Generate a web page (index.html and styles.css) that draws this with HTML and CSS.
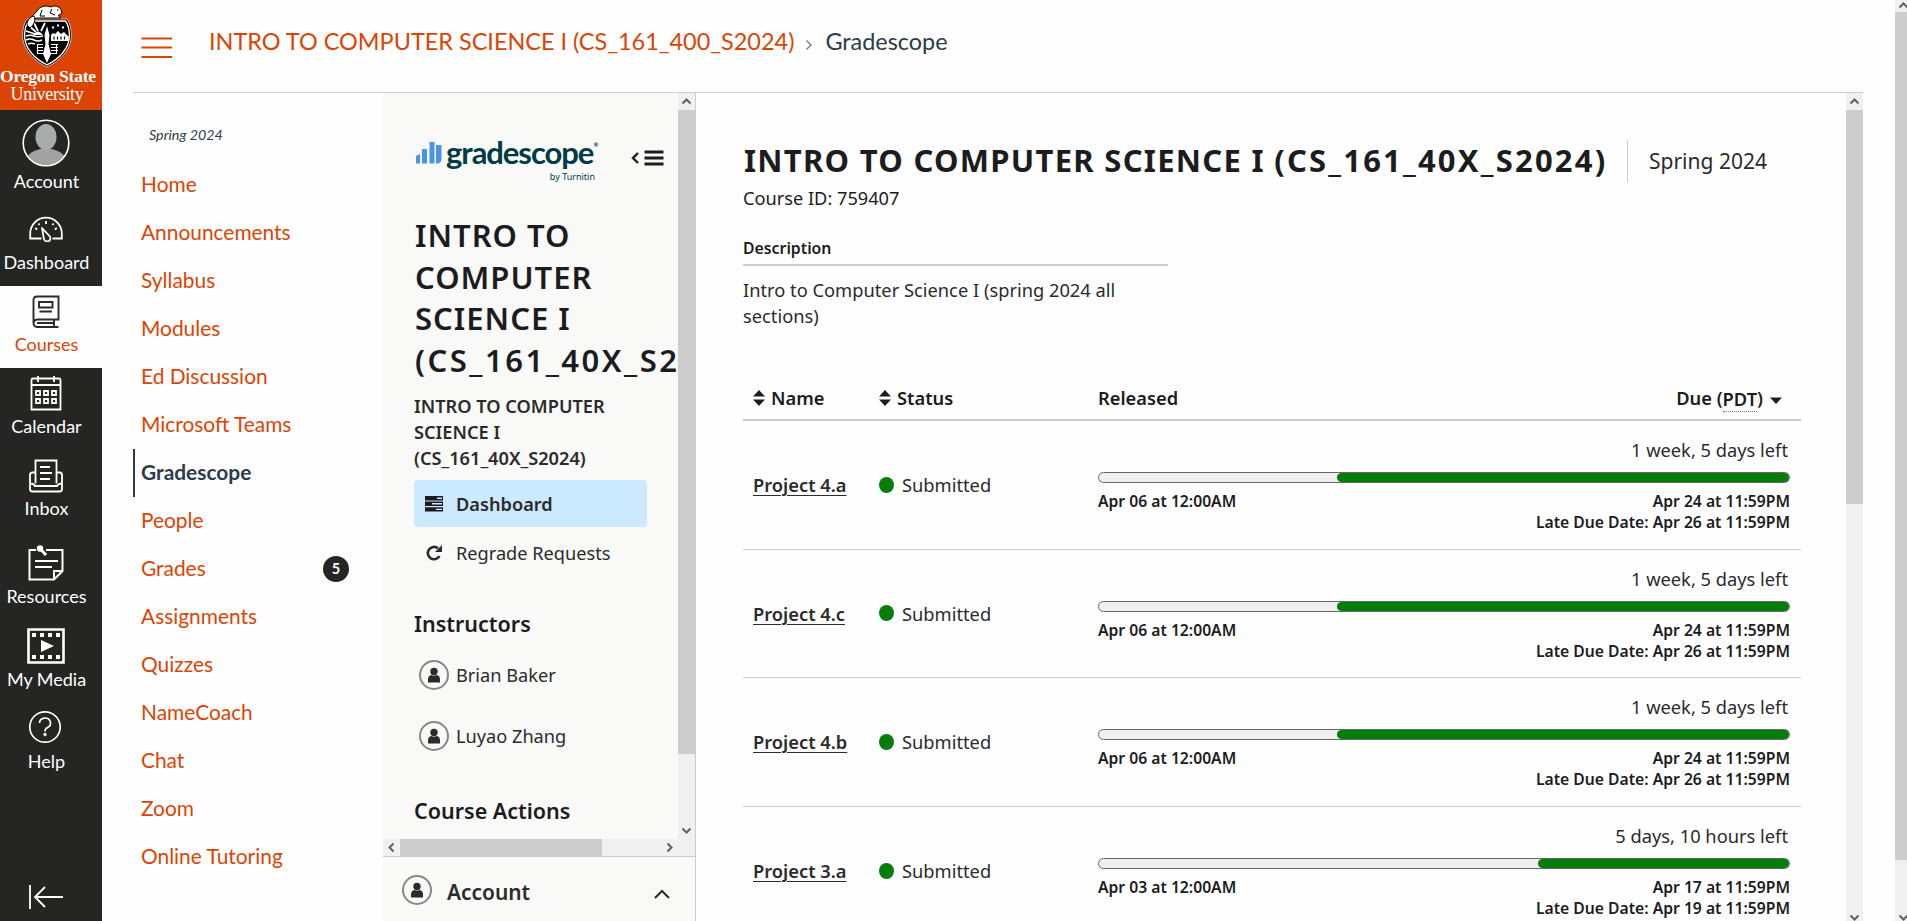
FILE: index.html
```html
<!DOCTYPE html>
<html lang="en">
<head>
<meta charset="utf-8">
<title>Gradescope</title>
<link rel="stylesheet" href="styles.css">
</head>
<body>
<div class="app">
  <nav class="global-nav">
    <div class="brand">
      <svg class="crest" width="50" height="63" viewBox="0 0 50 63">
        <path d="M5 14C1.500 19 .700 25 .700 31c0 13 11 25 24.300 31 13.300-6 24.300-18 24.300-31 0-6-.800-12-4.300-17z" fill="#000" stroke="#e9d9cf" stroke-width=".8"/>
        <path d="M6.500 16C3.500 20 2.600 25 2.600 31c0 12 10 23 22.400 28.800C37.400 54 47.400 43 47.400 31c0-6-.900-11-3.900-15z" fill="#000" stroke="#fff" stroke-width="1.300"/>
        <path d="M5 19l9 8M12 18l4 8M23 18l-4 8M4 26l9 3" stroke="#fff" stroke-width="1.800"/>
        <path d="M11 30q5-7 10 0z" fill="#fff"/>
        <path d="M4 31q4-1.500 8 0t9 0M4 35q4-2 8 0t8 0M6 39q3-1.500 7 0" stroke="#fff" stroke-width="1.700" fill="none"/>
        <path d="M25 21l-2.500 9 1 9-2.500 10 4 9 4-9-2.500-10 1-9z" fill="#fff"/>
        <path d="M29 36v-6l2-2 2 1 3-3 3 3 3-2 5 5-.5 4z" fill="#fff"/>
        <path d="M32 31.500v3M35.500 31.500v3M39 31.500v3M42.500 31.500v3" stroke="#000" stroke-width="1.200"/>
        <path d="M15 39.500h6M15 42.500h6M15 45.500h6M16 48.500h5M29 39.500h7M29 42.500h7M29 45.500h7M29 48.500h5M15.500 39v10M34.500 39v10" stroke="#fff" fill="none" stroke-width="1.200"/>
        <path d="M30 22.500h2M35 20.500h2M40 22.500h2" stroke="#fff" stroke-width="2"/>
        <path d="M10 14c0-4 3-5 5-8 3-5 9-6 14-4 3-2 8-1 10 2.500l1 4-4 2 3 2.500H15z" fill="#fff" stroke="#000" stroke-width="1"/>
        <path d="M5 20c0-5 3-8 7-9 2 4 0 9-4 12z" fill="#fff" stroke="#000" stroke-width="1"/>
        <path d="M20 5l-2 6h5M30 4l-2 4 5 2M35 5h1.500" stroke="#000" fill="none"/>
      </svg>
      <div class="brand-a">Oregon State</div>
      <div class="brand-b">University</div>
    </div>
    <a class="gn gn-account"><svg width="48" height="48" viewBox="0 0 48 48"><defs><clipPath id="av"><circle cx="24" cy="24" r="22"/></clipPath></defs><g clip-path="url(#av)"><ellipse cx="24" cy="42" rx="20" ry="12.500" fill="#a2a2a2"/><ellipse cx="24" cy="18" rx="10.500" ry="13" fill="#a9abaf"/></g><circle cx="24" cy="24" r="22.800" fill="none" stroke="#fff" stroke-width="1.600"/></svg><span>Account</span></a>
    <a class="gn"><svg width="36" height="26" viewBox="0 0 36 26" fill="none" stroke="#fff" stroke-width="1.800"><path d="M13.500 22.500H2.200V17.500a15.800 15.800 0 0 1 31.600 0v5H24.500"/><path d="M14 12l7 7.500a3.300 3.300 0 1 1-5.200 2.800z" stroke-linejoin="round"/><path d="M18 5v3M10.500 7.500l1 1.500M25.500 7.500l-1 1.500M7.200 12l2 1.500M28.800 12l-2 1.500"/></svg><span>Dashboard</span></a>
    <a class="gn gn-on"><svg width="28" height="34" viewBox="0 0 28 34" fill="none" stroke="#2b2b2b" stroke-width="1.900"><path d="M26.500 32H5C2.500 32 1.500 30 1.500 28V5c0-2.500 1.500-3.500 3.500-3.500h21.500v23H5.500c-2 0-3.500 1-3.500 3M5 28h17M22 25v6.500" /><path d="M7 7h13.500v5.500H7zM7.500 16.500H20"/></svg><span>Courses</span></a>
    <a class="gn"><svg width="32" height="36" viewBox="0 0 32 36" fill="none" stroke="#fff" stroke-width="1.800"><path d="M1.500 34.500V5q0-1.500 1.500-1.500h26q1.500 0 1.500 1.500v29.500zM1.500 10h29M8 1v6M24 1v6"/><path d="M6 16h4v4H6zM14 16h4v4h-4zM22 16h4v4h-4zM6 24h4v4H6zM14 24h4v4h-4zM22 24h4v4h-4z"/></svg><span>Calendar</span></a>
    <a class="gn"><svg width="36" height="34" viewBox="0 0 36 34" fill="none" stroke="#fff" stroke-width="1.800"><path d="M7.500 24.500V1.500h21v23M7.500 13.500H4.500q-2.500 0-2.500 2.500v14q0 2.500 2.500 2.500h27q2.500 0 2.500-2.500V16q0-2.500-2.500-2.500h-3M2 24.500c2 0 4 .5 5 2.500h22c1-2 3-2.500 5-2.500M12 8h10M12 14h12M12 20h10"/></svg><span>Inbox</span></a>
    <a class="gn gn-tall"><svg width="36" height="36" viewBox="0 0 36 36" fill="none" stroke="#fff" stroke-width="2"><path d="M8 5H1.500v29.500H26L34.500 26V5H18M26 34V26h8"/><path d="M7 16h23M7 22h17"/><path d="M12 3.500L18 10" stroke-width="3"/><circle cx="12" cy="3.500" r="3.200" fill="#fff" stroke="none"/></svg><span>Resources</span></a>
    <a class="gn gn-media"><svg width="38" height="36" viewBox="0 0 38 36"><path d="M1.500 1.500h35v33h-35z" fill="none" stroke="#fff" stroke-width="2.600"/><path d="M5 5h4v4H5zM13 5h4v4h-4zM21 5h4v4h-4zM29 5h4v4h-4zM5 27h4v4H5zM13 27h4v4h-4zM21 27h4v4h-4zM29 27h4v4h-4zM14 12l13 6-13 6z" fill="#fff"/></svg><span>My Media</span></a>
    <a class="gn gn-help"><svg width="34" height="34" viewBox="0 0 34 34" fill="none" stroke="#fff" stroke-width="1.700"><circle cx="17" cy="17" r="15.200"/><path d="M11.500 13a5.500 5 0 1 1 8 4.500q-2.500 1.200-2.500 4"/><circle cx="17" cy="24.500" r="1.300" fill="#fff" stroke-width="1"/></svg><span>Help</span></a>
    <div class="collapse"><svg width="36" height="26" viewBox="0 0 36 26" fill="none" stroke="#fff" stroke-width="1.800"><path d="M2 1v24M35 13H7M17 3L7 13l10 10"/></svg></div>
  </nav>
  <div class="page">
    <header class="crumbs">
      <svg class="burger" width="32" height="24" viewBox="0 0 32 24"><path d="M.500 2.500h30.500M.500 11.500h30.500M.500 21h30.500" stroke="#dc4405" stroke-width="2"/></svg>
      <a class="crumb-link">INTRO TO COMPUTER SCIENCE I (CS_161_400_S2024)</a>
      <svg class="crumb-sep" width="8" height="12" viewBox="0 0 8 12"><path d="M1.500 1.500L6 6l-4.500 4.500" fill="none" stroke="#777" stroke-width="1.300"/></svg>
      <span class="crumb-now">Gradescope</span>
    </header>
    <div class="body">
      <aside class="course-nav">
        <div class="term">Spring 2024</div>
        <a class="cn">Home</a><a class="cn">Announcements</a><a class="cn">Syllabus</a><a class="cn">Modules</a><a class="cn">Ed Discussion</a><a class="cn">Microsoft Teams</a><a class="cn cn-on">Gradescope</a><a class="cn">People</a><a class="cn">Grades<span class="badge">5</span></a><a class="cn">Assignments</a><a class="cn">Quizzes</a><a class="cn">NameCoach</a><a class="cn">Chat</a><a class="cn">Zoom</a><a class="cn">Online Tutoring</a>
      </aside>
      <section class="gs-side">
        <div class="gs-scroll">
          <div class="gs-content">
            <div class="gs-top">
              <svg class="gs-bars" width="26" height="22" viewBox="0 0 26 22" fill="#4a96e6"><path d="M0 14l4-2v9.500H0zM6 7h5v14.500H6zM13.500 0h5v21.500h-5zM20 3h5.500v14q0 3-3 4.500H20z"/></svg>
              <div class="gs-word"><div class="gs-name">gradescope<span class="reg">®</span></div><div class="gs-by">by Turnitin</div></div>
              <svg class="gs-menu" width="34" height="18" viewBox="0 0 34 18" fill="none" stroke="#1c1c1e"><path d="M8 4L3 9l5 5" stroke-width="2.400"/><path d="M14.500 3h19M14.500 9h19M14.500 15h19" stroke-width="3"/></svg>
            </div>
            <h1 class="gs-title">INTRO TO<br>COMPUTER<br>SCIENCE I<br><span class="gs-code">(CS_161_40X_S2024)</span></h1>
            <div class="gs-sub">INTRO TO COMPUTER<br>SCIENCE I<br>(CS_161_40X_S2024)</div>
            <a class="gs-link gs-link-on"><svg width="18" height="16" viewBox="0 0 18 16"><path d="M0 0h18v4.400H0zM0 5.600h18V10H0zM0 11.200h18v4.400H0z" fill="#1c1c1e"/><path d="M12 1.500h5v1.400h-5zM7 7.100h10v1.400H7zM11 12.700h6v1.400h-6z" fill="#cbe9ff"/></svg>Dashboard</a>
            <a class="gs-link gs-link-b"><svg width="18" height="18" viewBox="0 0 18 18"><path d="M14.500 12A6.200 6.200 0 1 1 13 4.300" fill="none" stroke="#2b2b2b" stroke-width="2.600"/><path d="M17 1v7h-7z" fill="#2b2b2b"/></svg>Regrade Requests</a>
            <h2 class="gs-h gs-h-a">Instructors</h2>
            <div class="person"><svg width="30" height="30" viewBox="0 0 30 30"><circle cx="15" cy="15" r="14" fill="none" stroke="#858788" stroke-width="2"/><circle cx="15" cy="11.500" r="3.700" fill="#2b2b2b"/><path d="M9 22.500v-3q0-4 3.500-4.500 2.500 1.500 5 0 3.500.5 3.500 4.500v3z" fill="#2b2b2b"/></svg>Brian Baker</div>
            <div class="person"><svg width="30" height="30" viewBox="0 0 30 30"><circle cx="15" cy="15" r="14" fill="none" stroke="#858788" stroke-width="2"/><circle cx="15" cy="11.500" r="3.700" fill="#2b2b2b"/><path d="M9 22.500v-3q0-4 3.500-4.500 2.500 1.500 5 0 3.500.5 3.500 4.500v3z" fill="#2b2b2b"/></svg>Luyao Zhang</div>
            <h2 class="gs-h gs-h-b">Course Actions</h2>
          </div>
          <div class="vbar"><svg class="arr" width="17" height="17" viewBox="0 0 17 17"><path d="M4.500 10.500l4-4 4 4"/></svg><div class="thumb thumb-v1"></div><svg class="arr arr-end" width="17" height="17" viewBox="0 0 17 17"><path d="M4.500 6.500l4 4 4-4"/></svg></div>
        </div>
        <div class="hbar"><svg class="arr" width="17" height="17" viewBox="0 0 17 17"><path d="M10.500 4.500l-4 4 4 4"/></svg><div class="thumb thumb-h"></div><svg class="arr arr-r" width="17" height="17" viewBox="0 0 17 17"><path d="M6.500 4.500l4 4-4 4"/></svg></div>
        <div class="gs-foot"><svg width="30" height="30" viewBox="0 0 30 30"><circle cx="15" cy="15" r="14" fill="none" stroke="#858788" stroke-width="2"/><circle cx="15" cy="11.500" r="3.700" fill="#2b2b2b"/><path d="M9 22.500v-3q0-4 3.500-4.500 2.500 1.500 5 0 3.500.5 3.500 4.500v3z" fill="#2b2b2b"/></svg><span>Account</span><svg class="foot-up" width="16" height="10" viewBox="0 0 16 10"><path d="M1 9l7-7 7 7" fill="none" stroke="#2b2b2b" stroke-width="2"/></svg></div>
      </section>
      <main class="main">
        <div class="title-row"><h1 class="title">INTRO TO COMPUTER SCIENCE I <span class="title-code">(CS_161_40X_S2024)</span></h1><div class="title-term">Spring 2024</div></div>
        <div class="cid">Course ID: 759407</div>
        <h3 class="desc-h">Description</h3>
        <p class="desc">Intro to Computer Science I (spring 2024 all<br>sections)</p>
        <div class="thead">
          <div class="th c-name"><svg width="12" height="16" viewBox="0 0 12 16"><path d="M6 0l6 6.500H0zM0 9.500h12L6 16z" fill="#1c1c1e"/></svg>Name</div>
          <div class="th c-status"><svg width="12" height="16" viewBox="0 0 12 16"><path d="M6 0l6 6.500H0zM0 9.500h12L6 16z" fill="#1c1c1e"/></svg>Status</div>
          <div class="th c-time"><span>Released</span><span class="due">Due (<span class="tz">PDT</span>)<svg width="12" height="7" viewBox="0 0 12 7"><path d="M0 .500h12L6 7z" fill="#1c1c1e"/></svg></span></div>
        </div>
        <div class="row"><div class="c-name"><a>Project 4.a</a></div><div class="c-status"><i class="dot"></i>Submitted</div><div class="c-time"><div class="left">1 week, 5 days left</div><div class="bar"><div class="fill" style="width:65.500%"></div></div><div class="dates"><span>Apr 06 at 12:00AM</span><span>Apr 24 at 11:59PM</span></div><div class="late">Late Due Date: Apr 26 at 11:59PM</div></div></div>
        <div class="row"><div class="c-name"><a>Project 4.c</a></div><div class="c-status"><i class="dot"></i>Submitted</div><div class="c-time"><div class="left">1 week, 5 days left</div><div class="bar"><div class="fill" style="width:65.500%"></div></div><div class="dates"><span>Apr 06 at 12:00AM</span><span>Apr 24 at 11:59PM</span></div><div class="late">Late Due Date: Apr 26 at 11:59PM</div></div></div>
        <div class="row"><div class="c-name"><a>Project 4.b</a></div><div class="c-status"><i class="dot"></i>Submitted</div><div class="c-time"><div class="left">1 week, 5 days left</div><div class="bar"><div class="fill" style="width:65.500%"></div></div><div class="dates"><span>Apr 06 at 12:00AM</span><span>Apr 24 at 11:59PM</span></div><div class="late">Late Due Date: Apr 26 at 11:59PM</div></div></div>
        <div class="row"><div class="c-name"><a>Project 3.a</a></div><div class="c-status"><i class="dot"></i>Submitted</div><div class="c-time"><div class="left">5 days, 10 hours left</div><div class="bar"><div class="fill" style="width:36.400%"></div></div><div class="dates"><span>Apr 03 at 12:00AM</span><span>Apr 17 at 11:59PM</span></div><div class="late">Late Due Date: Apr 19 at 11:59PM</div></div></div>
      </main>
      <div class="vbar"><svg class="arr" width="17" height="17" viewBox="0 0 17 17"><path d="M4.500 10.500l4-4 4 4"/></svg><div class="thumb thumb-v2"></div><svg class="arr arr-end" width="17" height="11" viewBox="0 0 17 11"><path d="M4.500 5.500l4 4 4-4"/></svg></div>
    </div>
  </div>
  <div class="outer-bar"><svg class="arr" width="12" height="12" viewBox="0 0 12 12"><path d="M4.500 7.500l4-4 4 4"/></svg><div class="thumb thumb-v3"></div><svg class="arr arr-end" width="12" height="11" viewBox="0 0 12 11"><path d="M4.500 5.500l4 4 4-4"/></svg></div>
</div>
</body>
</html>
```
FILE: styles.css
```css
* { box-sizing: border-box; }
body { margin: 0; background: #fefefe; overflow: hidden; font-family: Lato, "Noto Sans", sans-serif; }
h1, h2, h3, p { margin: 0; }
svg { display: block; flex: none; }
.app { display: flex; width: 1907px; height: 921px; overflow: hidden; }

/* Global navigation */
.global-nav { width: 102px; flex: none; background: #252523; display: flex; flex-direction: column; color: #fff; }
.brand { height: 110px; flex: none; background: #dc4405; color: #fff; font-family: "Liberation Serif", serif; text-align: center; overflow: hidden; white-space: nowrap; }
.crest { margin: 5px 0 0 22px; }
.brand-a { width: 95px; font-size: 17.6px; font-weight: bold; line-height: 17px; letter-spacing: -.25px; }
.brand-b { width: 94px; font-size: 18px; line-height: 18px; letter-spacing: -.3px; }
.gn { height: 82px; flex: none; padding-right: 9px; display: flex; flex-direction: column; align-items: center; justify-content: flex-end; font-size: 18px; line-height: 22px; padding-bottom: 13px; white-space: nowrap; }
.gn svg { margin: 0 1px 9px 0; }
.gn span { display: block; }
.gn-account { height: 94px; padding-bottom: 12px; }
.gn-account svg { margin-bottom: 3px; }
.gn-on { background: #fefefe; color: #dc4405; }
.gn-on svg, .gn:nth-child(5) svg, .gn:nth-child(6) svg { margin-bottom: 4px; }
.gn-tall { height: 88px; }
.gn-tall svg { margin-bottom: 4px; }
.gn-media { height: 83px; }
.gn-media svg { margin-bottom: 4px; }
.gn-help svg { margin: 0 3px 6px 0; }
.collapse { margin-top: auto; padding: 0 0 11px 28px; }

/* Page header */
.page { flex: 1; padding-left: 31px; display: flex; flex-direction: column; }
.crumbs { width: 1730px; height: 93px; flex: none; border-bottom: 1px solid #c7cdd1; display: flex; align-items: flex-start; padding-left: 8px; font-size: 23.450px; line-height: 28px; white-space: nowrap; }
.burger { margin: 36px 36px 0 0; }
.crumb-link { margin-top: 27px; color: #dc4405; }
.crumb-sep { margin: 39px 12px 0 11px; }
.crumb-now { margin-top: 27px; color: #2d3b45; font-size: 23.400px; }
.body { flex: 1; width: 1730px; display: flex; min-height: 0; }

/* Course navigation */
.course-nav { width: 250px; flex: none; padding-top: 32px; }
.term { height: 36px; padding-left: 16px; font-size: 14.300px; font-style: italic; line-height: 20px; color: #2d3b45; }
.cn { display: flex; align-items: center; justify-content: space-between; height: 48px; padding: 0 34px 3px 8px; font-size: 20.900px; color: #dc4405; }
.cn-on { border-left: 2px solid #2d3b55; padding-left: 6px; font-weight: bold; color: #2d3b4f; }
.badge { width: 26px; height: 26px; border-radius: 50%; background: #252523; color: #fff; font-size: 14.500px; font-weight: bold; line-height: 25px; text-align: center; margin-top: 3px; }

/* Gradescope sidebar */
.gs-side, .main { font-family: "Noto Sans", sans-serif; color: #2b2b2b; }
.gs-side { width: 313px; flex: none; background: #f9f9f8; border-right: 1px solid #ccc; display: flex; flex-direction: column; }
.gs-scroll { height: 746px; flex: none; display: flex; }
.gs-content { flex: 1; min-width: 0; overflow: hidden; padding: 49px 0 0 31px; white-space: nowrap; }
.gs-top { display: flex; height: 73px; padding-left: 2px; }
.gs-word { width: 150px; margin: -7px 0 0 4px; color: #023b46; font-family: Lato, sans-serif; }
.gs-name { font-size: 31px; font-weight: 700; line-height: 35px; letter-spacing: -1.05px; display: flex; }
.reg { font-size: 6px; line-height: 20px; letter-spacing: 0; }
.gs-by { font-family: "Noto Sans", sans-serif; font-size: 9px; line-height: 12px; text-align: right; padding-right: 1px; margin-top: 1px; }
.gs-menu { margin: 7px 0 0 34px; }
.gs-title { font-size: 31px; font-weight: 600; line-height: 41.6px; letter-spacing: 1px; color: #1c1c1e; margin-left: 1px; height: 166px; }
.gs-code { letter-spacing: 2.500px; }
.gs-sub { font-size: 18.200px; font-weight: 600; line-height: 26px; margin: 12px 0 9px; height: 78px; }
.gs-link { display: flex; align-items: center; width: 233px; height: 47px; padding-left: 11px; gap: 13px; font-size: 18.200px; border-radius: 4px; }
.gs-link-on { background: #cbe9ff; font-weight: 600; }
.gs-link-b { margin-top: 2px; }
.gs-h { font-size: 21.500px; font-weight: 600; line-height: 28px; color: #1c1c1e; }
.gs-h-a { margin: 34px 0 22px; }
.gs-h-b { margin-top: 31px; }
.person { display: flex; align-items: center; height: 61px; margin-top: 0; padding-left: 5px; gap: 7px; font-size: 18.200px; }
.gs-h-a + .person { margin-top: -16px; }
.vbar { width: 17px; flex: none; background: #f0f0f0; display: flex; flex-direction: column; }
.hbar { height: 17px; flex: none; background: #f0f0f0; display: flex; padding-right: 17px; }
.arr { fill: none; stroke: #606060; stroke-width: 2; }
.arr-end { margin-top: auto; }
.arr-r { margin-left: auto; }
.thumb { background: #cdcdcd; }
.thumb-v1 { height: 644px; }
.thumb-h { width: 202px; }
.thumb-v2 { height: 394px; }
.thumb-v3 { height: 848px; }
.gs-foot { flex: 1; border-top: 1px solid #ccc; display: flex; align-items: flex-start; padding: 18px 25px 0 19px; font-size: 20.900px; font-weight: 600; }
.gs-foot span { margin: 3px auto 0 15px; line-height: 28px; }
.foot-up { margin-top: 14px; }

/* Main content */
.main { flex: 1; min-width: 0; overflow: hidden; padding: 47px 45px 0 47px; white-space: nowrap; }
.title-row { display: flex; height: 42px; }
.title { width: 885px; font-size: 31px; font-weight: 700; line-height: 41px; letter-spacing: 1.280px; color: #1c1c1e; border-right: 1px solid #ccc; padding-left: 1px; }
.title-code { letter-spacing: 2.200px; }
.title-term { padding-left: 21px; font-size: 21px; line-height: 42px; }
.cid { font-size: 18.200px; line-height: 26px; margin-top: 3px; color: #1c1c1e; }
.desc-h { width: 425px; height: 36px; margin-top: 19px; border-bottom: 2px solid #ccc; font-size: 15.800px; line-height: 36px; font-weight: 600; color: #1c1c1e; }
.desc { font-size: 18.300px; line-height: 26px; margin-top: 11px; }
.thead { display: flex; height: 49px; margin-top: 43px; padding-top: 5px; border-bottom: 2px solid #ccc; font-size: 18.300px; font-weight: 600; line-height: 24px; color: #1c1c1e; }
.th { display: flex; align-items: center; }
.th svg { margin-right: 6px; }
.c-name { width: 126px; flex: none; padding-left: 10px; }
.c-status { width: 229px; flex: none; padding-left: 10px; }
.c-time { flex: 1; padding-right: 11px; }
.th.c-time { justify-content: space-between; }
.due { display: flex; align-items: center; padding-right: 8px; }
.due svg { margin: 4px 0 0 7px; }
.tz { line-height: 25px; border-bottom: 1px dotted #777; margin-top: 1px; }
.row { display: flex; height: 128.600px; border-bottom: 1px solid #ccc; font-size: 18.300px; }
.row > .c-name, .row > .c-status { display: flex; align-items: center; }
.row a { font-weight: 600; text-decoration: underline; text-underline-offset: 3px; text-decoration-thickness: 1px; }
.dot { width: 15px; height: 16px; border-radius: 50%; background: #047d0a; margin: 0 8px 0 0; }
.left { text-align: right; padding-right: 2px; line-height: 26px; margin-top: 16px; }
.bar { height: 11px; margin-top: 9px; border: 1px solid #666; border-radius: 6px; background: #f0f0f0; display: flex; justify-content: flex-end; }
.fill { background: #047d0a; border-radius: 5px; }
.dates { display: flex; justify-content: space-between; margin-top: 8px; }
.dates, .late { font-size: 15.700px; font-weight: 600; line-height: 21px; color: #1c1c1e; }
.late { text-align: right; }

.outer-bar { width: 12px; flex: none; background: #f0f0f0; display: flex; flex-direction: column; }
```
